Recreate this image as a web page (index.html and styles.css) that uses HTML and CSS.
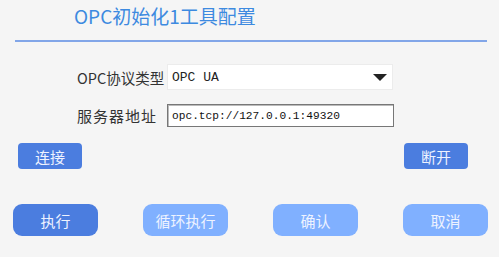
FILE: index.html
```html
<!DOCTYPE html>
<html lang="zh-CN">
<head>
    <meta charset="UTF-8">
    <meta name="viewport" content="width=device-width, initial-scale=1.0">
    <title>OPC初始化1工具配置</title>
    <link rel="stylesheet" href="styles.css">
</head>
<body>
    <div class="panel">
        <div class="header">
            <h1 class="title">OPC初始化1工具配置</h1>
        </div>
        <div class="divider"></div>

        <div class="form">
            <label class="label">OPC协议类型</label>
            <div class="select">
                <span class="select-text">OPC UA</span>
                <span class="arrow"></span>
            </div>

            <label class="label wide">服务器地址</label>
            <input class="input" type="text" value="opc.tcp://127.0.0.1:49320">
        </div>

        <div class="link-row">
            <button class="small-btn">连接</button>
            <button class="small-btn">断开</button>
        </div>

        <div class="actions">
            <button class="action-btn primary">执行</button>
            <button class="action-btn">循环执行</button>
            <button class="action-btn">确认</button>
            <button class="action-btn">取消</button>
        </div>
    </div>
</body>
</html>
```

FILE: styles.css
```css
body {
    margin: 0;
    background: #f5f5f5;
    font-family: "Noto Sans CJK SC", "Noto Sans", sans-serif;
}
.panel {
    width: 499px;
    height: 257px;
}
.header {
    height: 40px;
    padding-left: 74px;
}
.title {
    margin: 0;
    padding-top: 3px;
    font-size: 19px;
    font-weight: normal;
    line-height: 26px;
    color: #3d8ae0;
}
.divider {
    height: 2px;
    margin: 0 12px 0 15px;
    background: #82a6e8;
}
.form {
    display: grid;
    grid-template-columns: 90px 226px;
    row-gap: 14px;
    align-items: center;
    padding: 22px 0 0 77px;
}
.label {
    font-size: 14.5px;
    color: #333;
    white-space: nowrap;
}
.label.wide {
    font-size: 15px;
    letter-spacing: 1px;
}
.select {
    display: flex;
    align-items: center;
    justify-content: space-between;
    height: 24px;
    padding: 0 5px 0 4px;
    background: #fff;
    border: 1px solid #ececec;
}
.select-text {
    font-family: "Liberation Mono", monospace;
    font-size: 13px;
    color: #222;
}
.arrow {
    width: 0;
    height: 0;
    border-left: 7px solid transparent;
    border-right: 7px solid transparent;
    border-top: 7px solid #222;
}
.input {
    box-sizing: border-box;
    width: 227px;
    height: 23px;
    padding: 0 4px;
    border: 1px solid #777;
    box-shadow: inset 1px 1px 0 #bbb;
    background: #fff;
    font-family: "Liberation Mono", monospace;
    font-size: 11.2px;
    color: #111;
}
.link-row {
    display: flex;
    justify-content: space-between;
    padding: 16px 31px 0 18px;
}
.small-btn {
    width: 64px;
    height: 26px;
    border: none;
    border-radius: 4px;
    background: #4b7ddf;
    color: #eef3ff;
    font-family: inherit;
    font-size: 15px;
    padding: 0;
}
.actions {
    display: flex;
    justify-content: space-between;
    padding: 35px 11px 0 13px;
}
.action-btn {
    width: 85px;
    height: 32px;
    border: none;
    border-radius: 9px;
    background: #80b0ff;
    color: #eef3ff;
    font-family: inherit;
    font-size: 15px;
    padding: 0;
}
.action-btn.primary {
    background: #4b7ddf;
}
```
